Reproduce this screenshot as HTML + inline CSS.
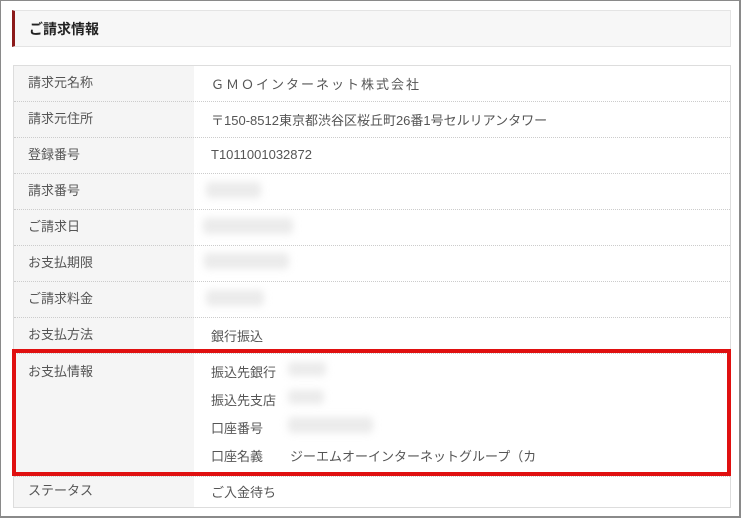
<!DOCTYPE html>
<html><head><meta charset="utf-8"><style>
*{margin:0;padding:0;box-sizing:border-box}
body{width:741px;height:518px;background:#fff;position:relative;overflow:hidden;font-family:"Liberation Sans","Noto Sans CJK JP",sans-serif;color:#333;font-size:13px}
.frame{position:absolute;left:0;top:0;width:741px;height:518px;border:1px solid #8a8a8a;border-right-width:2px;border-bottom-width:2px}
.head{position:absolute;left:12px;top:10px;width:719px;height:37px;background:#f7f7f7;border:1px solid #e4e4e4;border-left:3px solid #8c1a1a}
.head span{position:absolute;left:14px;top:8px;font-size:14px;font-weight:bold;color:#222}
.tbl{position:absolute;left:13px;top:65px;width:718px;height:443px;border:1px solid #ddd;background:#fff}
.lab{position:absolute;left:0;top:0;width:180px;height:441px;background:#f5f5f5}
.line{position:absolute;left:0;width:716px;border-top:1px dotted #ccc}
.t{position:absolute;white-space:nowrap;font-size:13px;color:#555}
.blur{position:absolute;background:#ddd;filter:blur(4px);border-radius:4px;opacity:.6}
.red{position:absolute;left:12px;top:349px;width:719px;height:127px;border:4px solid #e01010}
</style></head><body>
<div class="frame"></div>
<div class="head"><span>ご請求情報</span></div>
<div class="tbl"><div class="lab"></div>
<div class="line" style="top:35px"></div><div class="line" style="top:71px"></div><div class="line" style="top:107px"></div><div class="line" style="top:143px"></div><div class="line" style="top:179px"></div><div class="line" style="top:215px"></div><div class="line" style="top:251px"></div><div class="line" style="top:287px"></div><div class="line" style="top:410px"></div>
</div>
<div class="t" style="left:28px;top:72px">請求元名称</div><div class="t" style="left:211px;top:74px;letter-spacing:2px">ＧＭＯインターネット株式会社</div>
<div class="t" style="left:28px;top:108px">請求元住所</div><div class="t" style="left:211px;top:110px">〒150-8512東京都渋谷区桜丘町26番1号セルリアンタワー</div>
<div class="t" style="left:28px;top:144px">登録番号</div><div class="t" style="left:211px;top:147px">T1011001032872</div>
<div class="t" style="left:28px;top:180px">請求番号</div><div class="blur" style="left:206px;top:182px;width:55px;height:16px"></div>
<div class="t" style="left:28px;top:216px">ご請求日</div><div class="blur" style="left:203px;top:218px;width:90px;height:16px"></div>
<div class="t" style="left:28px;top:252px">お支払期限</div><div class="blur" style="left:204px;top:253px;width:85px;height:16px"></div>
<div class="t" style="left:28px;top:288px">ご請求料金</div><div class="blur" style="left:206px;top:290px;width:58px;height:16px"></div>
<div class="t" style="left:28px;top:324px">お支払方法</div><div class="t" style="left:211px;top:326px">銀行振込</div>
<div class="t" style="left:28px;top:361px">お支払情報</div>
<div class="t" style="left:211px;top:362px">振込先銀行</div><div class="blur" style="left:288px;top:362px;width:38px;height:14px"></div>
<div class="t" style="left:211px;top:390px">振込先支店</div><div class="blur" style="left:288px;top:390px;width:36px;height:14px"></div>
<div class="t" style="left:211px;top:418px">口座番号</div><div class="blur" style="left:288px;top:417px;width:85px;height:16px"></div>
<div class="t" style="left:211px;top:446px">口座名義</div><div class="t" style="left:290px;top:446px">ジーエムオーインターネットグループ（カ</div>
<div class="t" style="left:28px;top:480px">ステータス</div><div class="t" style="left:211px;top:482px">ご入金待ち</div>
<div class="red"></div>
</body></html>
